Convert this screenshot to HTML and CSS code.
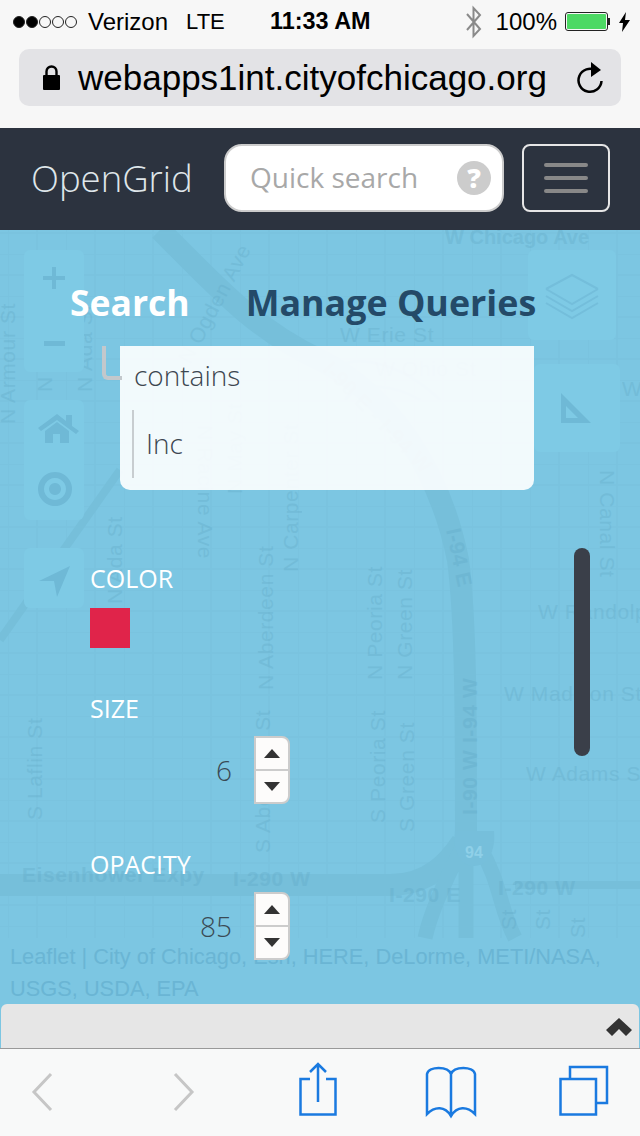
FILE: index.html
```html
<!DOCTYPE html>
<html lang="en">
<head>
<meta charset="utf-8">
<title>OpenGrid</title>
<link rel="stylesheet" href="styles.css">
</head>
<body>
<div class="phone">
  <header class="chrome">
    <div class="status">
      <div class="status-left">
        <span class="signal"><i class="dot on"></i><i class="dot on"></i><i class="dot"></i><i class="dot"></i><i class="dot"></i></span>
        <span class="carrier">Verizon</span>
        <span class="net">LTE</span>
      </div>
      <div class="clock">11:33 AM</div>
      <div class="status-right">
        <svg class="bt" width="18" height="34" viewBox="0 0 18 34"><path d="M2 9l13 15-6.500 7V3l6.500 7L2 25" fill="none" stroke="#8a8a8a" stroke-width="2"/></svg>
        <span class="pct">100%</span>
        <span class="battery"><span class="battery-fill"></span></span>
        <span class="battery-tip"></span>
        <svg class="bolt" width="11" height="20" viewBox="0 0 11 20"><path d="M7 0L0 11h4l-1 9 8-12H6z" fill="#000"/></svg>
      </div>
    </div>
    <div class="url-row">
      <div class="url-bar">
        <svg class="lock" width="17" height="25" viewBox="0 0 17 25"><path d="M3.500 11V6.500a5 5 0 0 1 10 0V11" fill="none" stroke="#000" stroke-width="2.400"/><rect y="10" width="17" height="15" rx="1" fill="#000"/></svg>
        <span class="url">webapps1int.cityofchicago.org</span>
        <svg class="reload" width="28" height="32" viewBox="0 0 28 32"><path d="M20 8.500A11.500 11.500 0 1 0 25.500 19" fill="none" stroke="#000" stroke-width="2.500"/><path d="M15 0l10 8-10 7z" fill="#000"/></svg>
      </div>
    </div>
  </header>

  <nav class="navbar">
    <div class="brand">OpenGrid</div>
    <div class="search">
      <span class="placeholder">Quick search</span>
      <span class="help">?</span>
    </div>
    <button class="menu" type="button" aria-label="Menu"><i></i><i></i><i></i></button>
  </nav>

  <main class="stage">
    <svg class="map" width="640" height="818" viewBox="0 230 640 818">
      <defs>
        <pattern id="blocks" x="8" y="2" width="58" height="42" patternUnits="userSpaceOnUse">
          <path d="M0 0H58M0 0V42M29 0V42M0 21H58" fill="none" stroke="#72bcd8" stroke-width="1.500"/>
        </pattern>
      </defs>
      <rect x="0" y="230" width="640" height="708" fill="url(#blocks)" opacity=".32"/>
      <g fill="none" stroke="#76bfda" stroke-linecap="butt">
        <path d="M160 230C215 285 255 330 320 360C390 395 440 470 458 560C466 620 466 720 466 840" stroke-width="22"/>
        <path d="M0 885H390C430 885 450 860 462 842" stroke-width="22"/>
        <path d="M480 848C500 880 500 910 515 938M462 848C440 890 430 915 425 938M466 850V938" stroke-width="15"/>
        <path d="M515 885H640" stroke-width="8"/>
        <path d="M120 470L0 640" stroke-width="8"/>
        <path d="M330 375C345 350 400 360 440 400M345 400C360 380 395 385 420 400" stroke-width="3"/>
      </g>
      <g class="lbl">
        <text x="445" y="244" class="tight">W Chicago Ave</text>
        <text x="340" y="342">W Erie St</text>
        <text x="375" y="376">W Ohio St</text>
        <text x="622" y="396">W</text>
        <text x="538" y="619">W Randolph St</text>
        <text x="504" y="701">W Madison St</text>
        <text x="526" y="781">W Adams St</text>
        <text x="22" y="882" class="b">Eisenhower Expy</text>
        <text x="233" y="886" class="b">I-290 W</text>
        <text x="389" y="902" class="b">I-290 E</text>
        <text x="498" y="895" class="b">I-290 W</text>
        <text transform="translate(15 424) rotate(-90)">N Armour St</text>
        <text transform="translate(52 392) rotate(-90)">N Elizabeth St</text>
        <text transform="translate(92 392) rotate(-90)">N Ada St</text>
        <text transform="translate(122 604) rotate(-90)">N Ada St</text>
        <text transform="translate(190 365) rotate(-62)">N Ogden Ave</text>
        <text transform="translate(198 425) rotate(90)">N Racine Ave</text>
        <text transform="translate(242 494) rotate(-90)">N May St</text>
        <text transform="translate(298 572) rotate(-90)">N Carpenter St</text>
        <text transform="translate(273 690) rotate(-90)">N Aberdeen St</text>
        <text transform="translate(270 853) rotate(-90)">S Aberdeen St</text>
        <text transform="translate(42 820) rotate(-90)">S Laflin St</text>
        <text transform="translate(382 680) rotate(-90)">N Peoria St</text>
        <text transform="translate(412 680) rotate(-90)">N Green St</text>
        <text transform="translate(385 823) rotate(-90)">S Peoria St</text>
        <text transform="translate(414 832) rotate(-90)">S Green St</text>
        <text transform="translate(600 470) rotate(90)">N Canal St</text>
        <text transform="translate(322 370) rotate(46)" class="b">I-90 E - I-94 W</text>
        <text transform="translate(446 530) rotate(78)" class="b">I-94 E</text>
        <text transform="translate(477 815) rotate(-90)" class="b">I-90 W I-94 W</text>
        <text transform="translate(516 930) rotate(-90)">St</text>
        <text transform="translate(550 930) rotate(-90)">St</text>
        <text transform="translate(585 938) rotate(-90)">St</text>
      </g>
      <path d="M455 831H494C496 850 488 866 474 866C460 866 452 850 455 831Z" fill="#76bfdb"/>
      <text x="474" y="858" class="shield">94</text>
      <g class="ctl">
        <rect x="24" y="250" width="60" height="122" rx="6"/>
        <rect x="24" y="400" width="60" height="120" rx="6"/>
        <rect x="24" y="548" width="60" height="60" rx="6"/>
        <rect x="528" y="250" width="88" height="90" rx="6"/>
        <rect x="534" y="364" width="86" height="88" rx="6"/>
      </g>
      <g class="ico">
        <path d="M52 267h4v9h9v4h-9v9h-4v-9h-9v-4h9zM44 341h21v5H44z"/>
        <path d="M38 428l19-14 9 7v-6h6v11l7 5-3 3-19-14-16 11zM45 431l12-9 12 9v12H60v-9h-7v9h-8z"/>
        <path fill-rule="evenodd" d="M55 472a17 17 0 1 0 .010 0zM55 478a11 11 0 1 1-.010 0zM55 483a6 6 0 1 0 .010 0z"/>
        <path d="M39 581l31-15-13 31-3-16z"/>
        <path fill-rule="evenodd" d="M561 393l30 30H561zM566 406v12h12z"/>
      </g>
      <path d="M546 289l26 15 26-15M546 296l26 15 26-15M546 303l26 15 26-15M546 289l26-14 26 14" class="layers"/>
      <text x="10" y="964" class="attr">Leaflet | City of Chicago, Esri, HERE, DeLorme, METI/NASA,</text>
      <text x="10" y="996" class="attr">USGS, USDA, EPA</text>
    </svg>

    <div class="overlay">
      <div class="tabs">
        <span class="tab active">Search</span>
        <span class="tab">Manage Queries</span>
      </div>

      <div class="query">
        <span class="elbow"></span>
        <div class="op">contains</div>
        <div class="term">Inc</div>
      </div>

      <section class="field color-field">
        <div class="label">COLOR</div>
        <div class="swatch"></div>
      </section>

      <section class="field size-field">
        <div class="label">SIZE</div>
        <div class="stepper">
          <span class="value">6</span>
          <span class="spin"><b class="up"></b><b class="down"></b></span>
        </div>
      </section>

      <section class="field opacity-field">
        <div class="label">OPACITY</div>
        <div class="stepper">
          <span class="value">85</span>
          <span class="spin"><b class="up"></b><b class="down"></b></span>
        </div>
      </section>

      <div class="drawer">
        <svg width="26" height="18" viewBox="0 0 26 18"><path d="M13 0l13 12-6 6-7-7-7 7-6-6z" fill="#333"/></svg>
      </div>
    </div>
    <span class="scrollbar"></span>
  </main>

  <footer class="toolbar">
    <svg width="640" height="88" viewBox="0 0 640 88" fill="none">
      <path d="M51 26L34 44l17 18M175 26l17 18-17 18" stroke="#c6c6c6" stroke-width="3"/>
      <g stroke="#1a7ae0" stroke-width="2.500">
        <path d="M310 31h-9.500v35.500h35V31H326M318 54V16M310 24l8-8 8 8"/>
        <path d="M451 26c-3-8-22-8-24 0v40c8-8 18-8 24 2 6-10 16-10 24-2V26c-2-8-21-8-24 0zM451 26v42"/>
        <path d="M570 30V19h37v36h-10M560.500 31h35.500v35.500h-35.500z"/>
      </g>
    </svg>
  </footer>
</div>
</body>
</html>
```
FILE: styles.css
```css
* { box-sizing: border-box; }
html, body { margin: 0; padding: 0; }
body { background: #f7f7f7; font-family: "Liberation Sans", Arial, sans-serif; }

.phone { width: 640px; height: 1136px; display: flex; flex-direction: column; overflow: hidden; }

.chrome { height: 128px; background: #f7f7f7; display: flex; flex-direction: column; flex: none; }
.status { height: 49px; display: flex; align-items: center; justify-content: space-between; padding: 0 10px 6px 13px; position: relative; color: #000; font-size: 24px; }
.status-left { display: flex; align-items: center; }
.signal { display: flex; gap: 1px; margin-right: 11px; }
.dot { width: 12px; height: 12px; border-radius: 50%; border: 1px solid #222; display: block; }
.dot.on { background: #000; }
.net { margin-left: 18px; font-size: 22px; }
.clock { font-weight: 700; font-size: 23.400px; position: absolute; left: 270px; }
.status-right { display: flex; align-items: center; }
.bt { margin-right: 13px; }
.pct { margin-right: 8px; }
.battery { width: 43px; height: 19px; border: 1px solid #222; border-radius: 3px; padding: 1px; display: block; }
.battery-fill { display: block; width: 100%; height: 100%; background: #4cd964; border-radius: 1px; }
.battery-tip { width: 2px; height: 7px; background: #222; margin-right: 9px; }

.url-row { padding: 0 19px; }
.url-bar { height: 57px; background: #e3e3e6; border-radius: 10px; display: flex; align-items: center; padding: 0 17px 0 24px; }
.lock { flex: none; margin-right: 18px; }
.url { flex: 1; font-size: 35px; color: #000; white-space: nowrap; }
.reload { flex: none; }

.navbar { height: 102px; flex: none; background: #2c333f; display: flex; align-items: center; padding: 0 30px 2px 31px; }
.brand { color: #dfe6ea; font-family: "Open Sans", sans-serif; font-weight: 300; font-size: 36.500px; width: 193px; white-space: nowrap; }
.search { width: 280px; height: 68px; background: #fff; border: 2px solid #ccc; border-radius: 18px; display: flex; align-items: center; justify-content: space-between; padding: 0 11px 0 24px; margin-right: 18px; }
.placeholder { font-family: "Open Sans", sans-serif; font-size: 28px; color: #a8a8a8; margin-top: -2px; }
.help { width: 34px; height: 34px; border-radius: 50%; background: #ccc; color: #fff; font: 800 27px/34px "Open Sans", sans-serif; text-align: center; }
.menu { width: 88px; height: 68px; background: none; border: 2px solid #e6e6e6; border-radius: 8px; padding: 0; display: flex; flex-direction: column; align-items: center; justify-content: center; gap: 9px; }
.menu i { display: block; width: 44px; height: 4px; border-radius: 2px; background: #888; }

.stage { flex: 1; position: relative; background: #7cc6e2; overflow: hidden; }
.map { position: absolute; left: 0; top: 0; display: block; }
.lbl text { font: 400 21px "Liberation Sans", sans-serif; fill: #5fa6c4; opacity: .3; letter-spacing: .6px; }
.lbl text.b { font-weight: 700; }
.lbl text.tight { font-weight: 700; font-size: 20px; letter-spacing: 0; }
.shield { font: 700 16px "Liberation Sans", sans-serif; fill: #8fd0e8; text-anchor: middle; }
.ctl rect { fill: #7ecae5; }
.ico path { fill: #6fb9d6; }
.layers { fill: none; stroke: #74bedb; stroke-width: 2; }
.attr { font: 21.800px "Liberation Sans", sans-serif; fill: #6ab5d4; }

.overlay { position: relative; height: 100%; display: flex; flex-direction: column; }
.tabs { display: flex; gap: 56px; padding: 49px 0 0 70px; height: 116px; }
.tab { font: 700 35.800px/46px "Open Sans", sans-serif; color: #244a68; white-space: nowrap; }
.tab.active { color: #fff; font-size: 35.500px; }

.query { position: relative; margin-left: 120px; width: 414px; height: 144px; background: rgba(255,255,255,.9); border-radius: 0 0 10px 10px; padding: 10px 14px 0; flex: none; }
.elbow { position: absolute; left: -18px; top: 0; width: 20px; height: 34px; border: solid #c3c8cc; border-width: 0 0 4px 4px; border-bottom-left-radius: 6px; }
.op { font: 300 28px/38px "Open Sans", sans-serif; color: #3c4650; }
.term { margin: 16px 0 0 -2px; height: 68px; border-left: 2px solid #c8cdd0; padding-left: 12px; font: 300 28px/66px "Open Sans", sans-serif; color: #3c4650; }

.field { margin-left: 90px; flex: none; }
.label { font: 400 25px/34px "Open Sans", sans-serif; color: #fff; }
.color-field { margin-top: 71px; }
.swatch { width: 40px; height: 40px; background: #e0244a; margin-top: 13px; }
.size-field { margin-top: 43px; }
.opacity-field { margin-top: 43px; }
.stepper { display: flex; align-items: center; justify-content: flex-end; width: 200px; margin-top: 11px; }
.value { font: 300 28px/38px "Open Sans", sans-serif; color: #3a4a55; margin-right: 22px; }
.spin { width: 36px; height: 68px; border: 2px solid #ccc; border-radius: 0 8px 8px 0; background: #fdfcfb; display: flex; flex-direction: column; }
.spin b { flex: 1; display: flex; align-items: center; justify-content: center; }
.spin b.down { border-top: 2px solid #ccc; }
.up::before { content: ""; border: solid transparent; border-width: 0 8px 9px; border-bottom-color: #333; }
.down::before { content: ""; border: solid transparent; border-width: 9px 8px 0; border-top-color: #333; }

.drawer { margin: auto 1px 0; height: 44px; flex: none; background: #e6e6e6; border-radius: 6px 6px 0 0; display: flex; justify-content: flex-end; padding: 14px 7px 0 0; }

.scrollbar { position: absolute; left: 574px; top: 318px; width: 16px; height: 208px; border-radius: 8px; background: #3a3f49; }

.toolbar { height: 88px; flex: none; background: #f8f9f9; border-top: 1px solid #999; }
.toolbar svg { display: block; margin-top: -1px; }
```
